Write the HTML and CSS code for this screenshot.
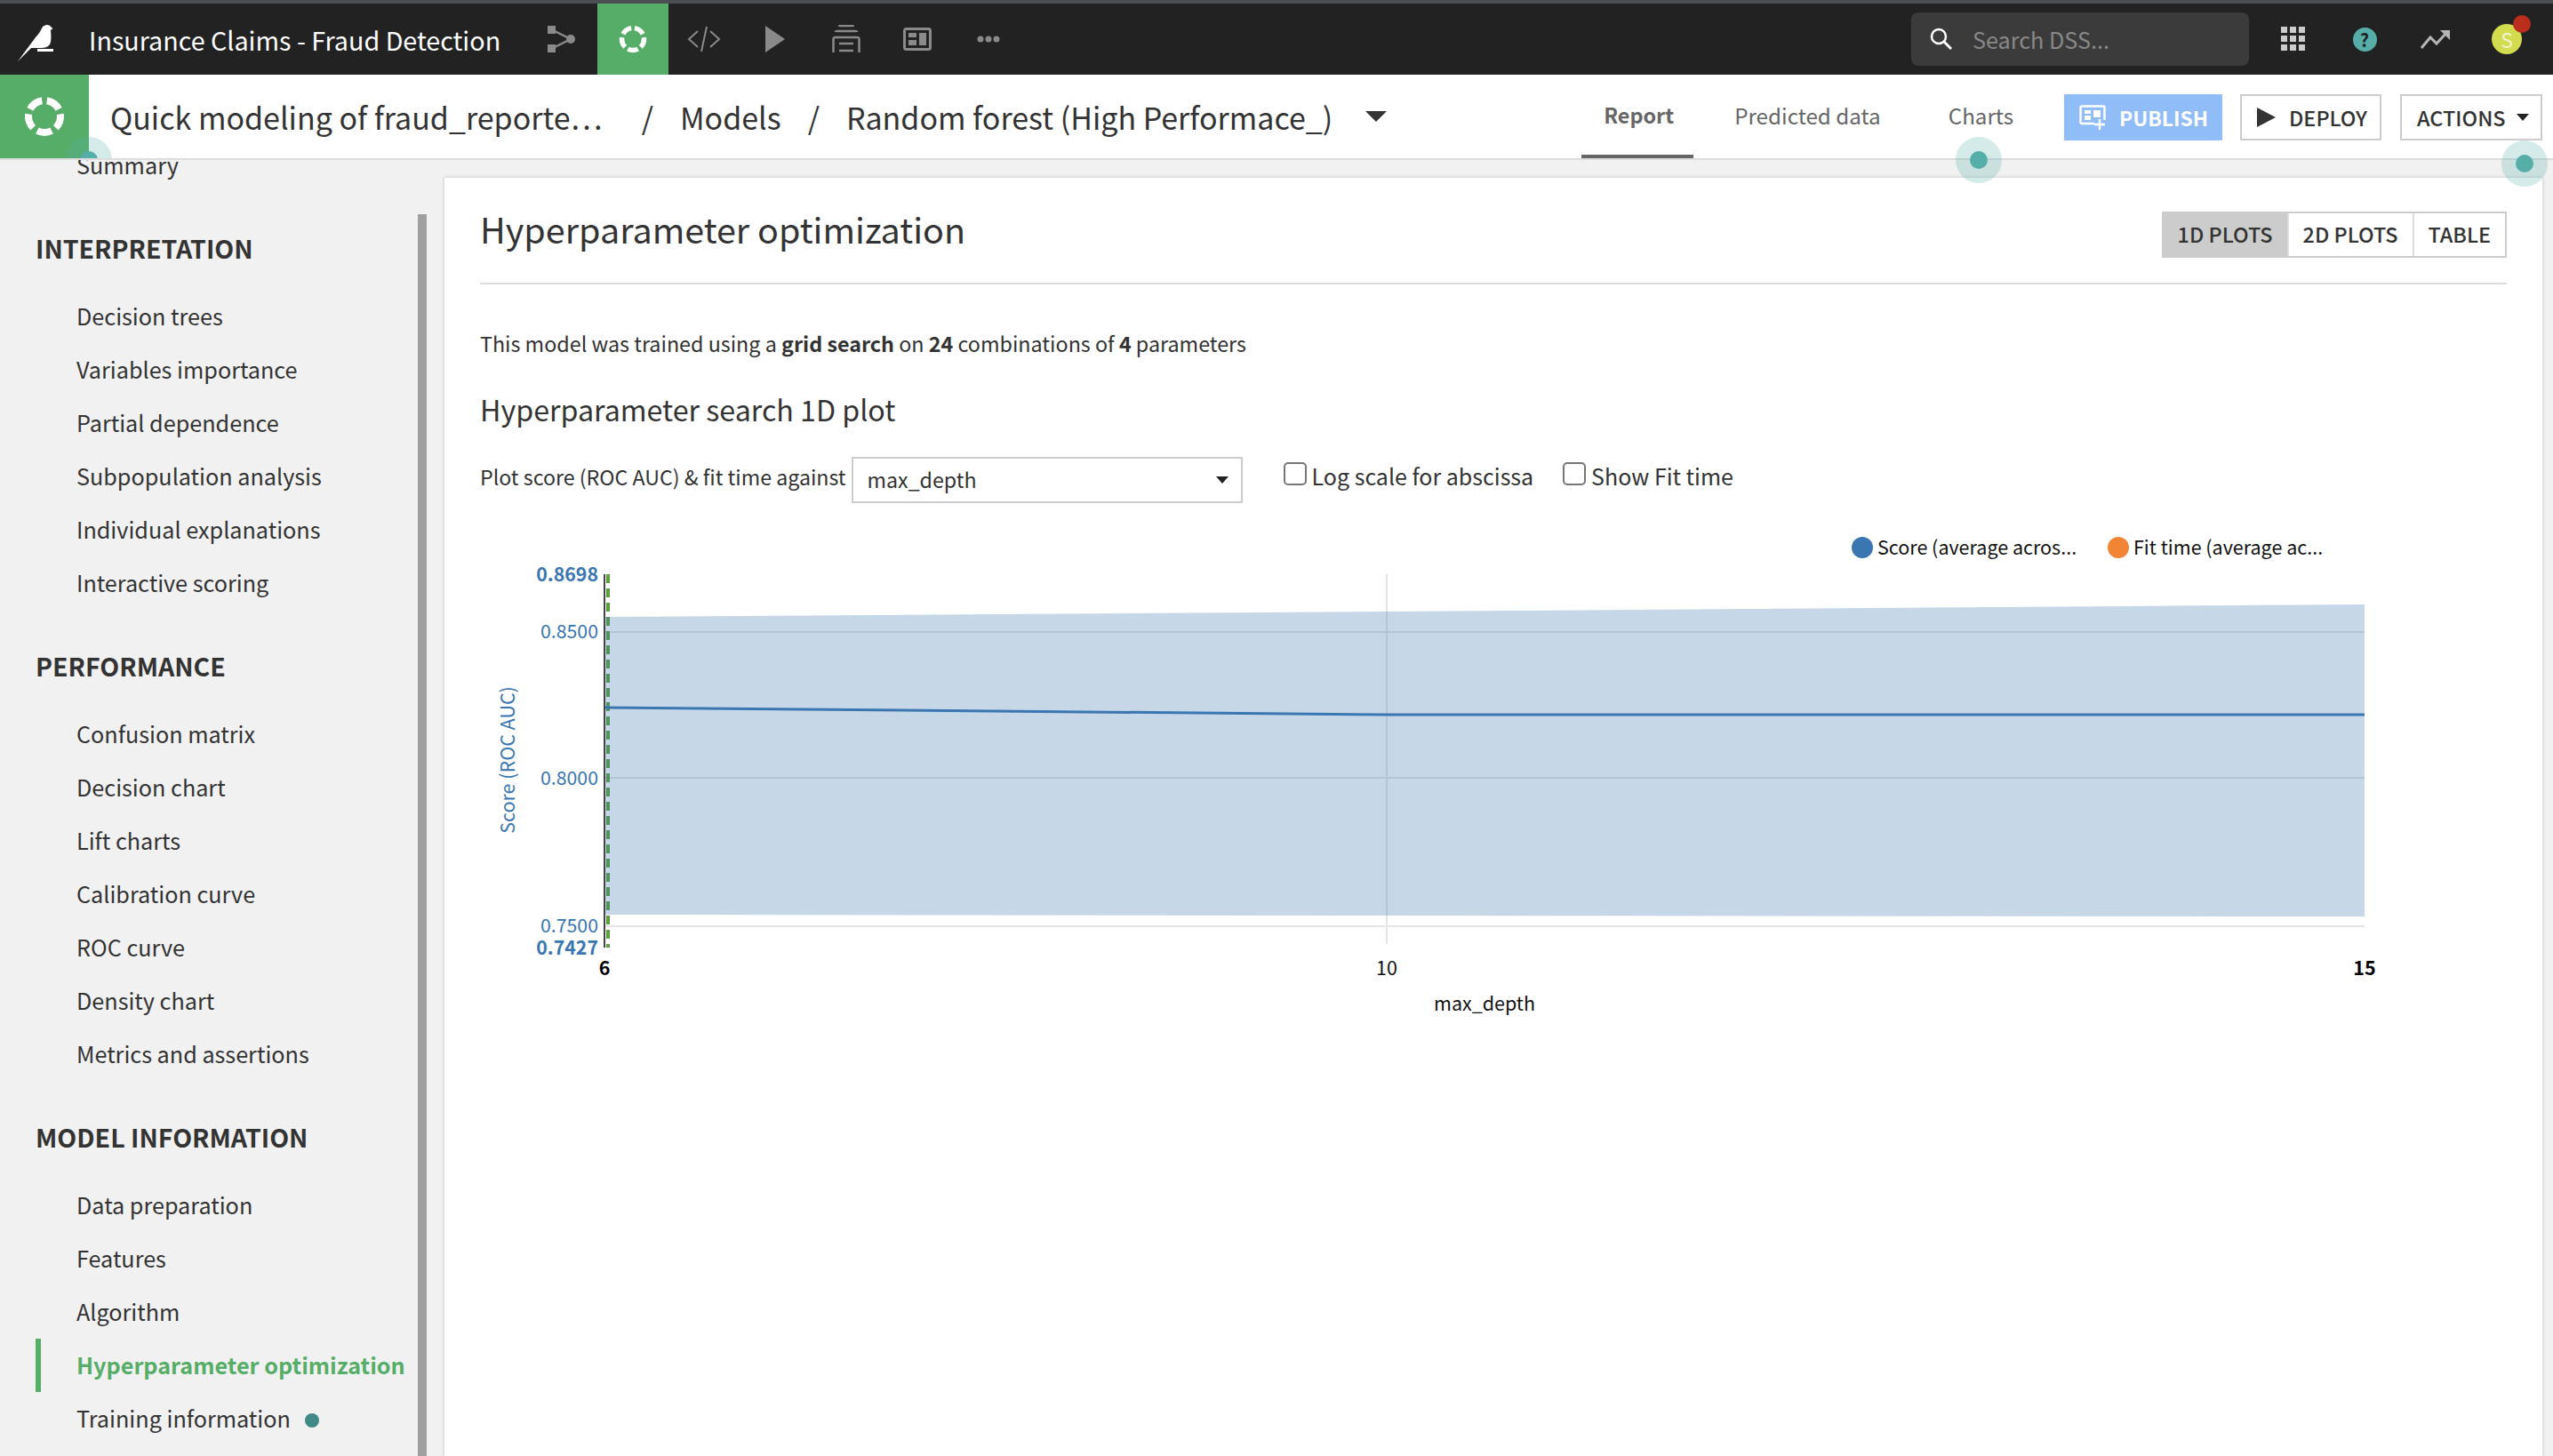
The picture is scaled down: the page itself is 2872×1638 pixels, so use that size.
FILE: index.html
```html
<!DOCTYPE html>
<html lang="en">
<head>
  <meta charset="UTF-8">
  <meta name="viewport" content="width=device-width, initial-scale=1.0">
  <title>Insurance Claims - Fraud Detection</title>
  <link rel="stylesheet" href="styles.css">
</head>
<body>
  <div id="page">
    <!-- top bar -->
    <div class="topbar">
      <div class="logo-cell">
        <svg width="44" height="44" viewBox="18 26 44 44"><path d="M20 69 L40 42 C44 38 46 34 47 32 C48 29 51 28 53 28 C55 28 57 29 58 31 L59.500 32 L57 34 C57.500 40 58 46 56 50 C54 53 50 54 46 54 H38 L35 54 Z" fill="#fff"/><rect x="42" y="55" width="18" height="3" fill="#fff"/></svg>
      </div>
      <div class="project-title">Insurance Claims - Fraud Detection</div>
      <div class="nav-cell">
        <svg width="32" height="32" viewBox="0 0 32 32"><g fill="#8a8a8a"><rect x="0" y="1" width="9" height="9"/><rect x="0" y="22" width="9" height="9"/><circle cx="26" cy="16" r="5"/></g><path d="M6 6 L26 16 L6 26" fill="none" stroke="#8a8a8a" stroke-width="2.5"/></svg>
      </div>
      <div class="nav-cell active">
        <svg width="32" height="32" viewBox="0 0 32 32"><circle cx="16" cy="16" r="12.500" fill="none" stroke="#fff" stroke-width="5.500" pathLength="100" stroke-dasharray="15 5" stroke-dashoffset="-17.500"/></svg>
      </div>
      <div class="nav-cell">
        <svg width="38" height="32" viewBox="0 0 38 32"><path d="M12 7 L2 16 L12 25 M26 7 L36 16 L26 25 M22 2 L16 30" fill="none" stroke="#8a8a8a" stroke-width="2"/></svg>
      </div>
      <div class="nav-cell">
        <svg width="22" height="30" viewBox="0 0 22 30"><path d="M0 0 L22 15 L0 30 Z" fill="#8a8a8a"/></svg>
      </div>
      <div class="nav-cell">
        <svg width="32" height="32" viewBox="0 0 32 32"><g fill="none" stroke="#8a8a8a" stroke-width="2.5"><path d="M8 2 Q8 1 10 1 H22 Q24 1 24 2"/><path d="M4 8 Q4 7 6 7 H26 Q28 7 28 8"/><path d="M1.500 31 V16 Q1.500 14 4 14 H28 Q30.500 14 30.500 16 V31"/><path d="M8 21 H24 M8 29 H24"/></g></svg>
      </div>
      <div class="nav-cell">
        <svg width="32" height="26" viewBox="0 0 32 26"><rect x="1.500" y="1.500" width="29" height="23" rx="2" fill="none" stroke="#8a8a8a" stroke-width="3"/><rect x="6" y="6" width="9" height="5" fill="#8a8a8a"/><rect x="6" y="14" width="9" height="6" fill="#8a8a8a"/><rect x="18" y="6" width="8" height="14" fill="#8a8a8a"/></svg>
      </div>
      <div class="nav-cell">
        <svg width="26" height="8" viewBox="0 0 26 8"><g fill="#8a8a8a"><circle cx="4" cy="4" r="3.500"/><circle cx="13" cy="4" r="3.500"/><circle cx="22" cy="4" r="3.500"/></g></svg>
      </div>
      <div class="search-box">
        <svg width="28" height="28" viewBox="0 0 28 28"><circle cx="11" cy="11" r="8" fill="none" stroke="#fff" stroke-width="2.500"/><path d="M17 17 L25 25" stroke="#fff" stroke-width="3"/></svg>
        <span>Search DSS...</span>
      </div>
      <div class="nav-cell">
        <svg width="28" height="28" viewBox="0 0 28 28"><g fill="#ccc"><rect x="0" y="0" width="7" height="7"/><rect x="10" y="0" width="7" height="7"/><rect x="20" y="0" width="7" height="7"/><rect x="0" y="10" width="7" height="7"/><rect x="10" y="10" width="7" height="7"/><rect x="20" y="10" width="7" height="7"/><rect x="0" y="20" width="7" height="7"/><rect x="10" y="20" width="7" height="7"/><rect x="20" y="20" width="7" height="7"/></g></svg>
      </div>
      <div class="nav-cell"><span class="help-badge">?</span></div>
      <div class="nav-cell">
        <svg width="34" height="22" viewBox="0 0 34 22"><path d="M1 21 L11 9 L18 16 L29 4" fill="none" stroke="#b5b5b5" stroke-width="3"/><path d="M22 1 H33 V12 Z" fill="#b5b5b5"/></svg>
      </div>
      <div class="nav-cell">
        <span class="avatar">S<span class="avatar-dot"></span></span>
      </div>
    </div>

    <!-- breadcrumb and tabs -->
    <div class="subnav">
      <div class="model-badge">
        <svg width="46" height="46" viewBox="0 0 46 46"><circle cx="23" cy="23" r="18" fill="none" stroke="#fff" stroke-width="8" pathLength="100" stroke-dasharray="15 5" stroke-dashoffset="-17.500"/></svg>
      </div>
      <span class="hotspot hotspot-left"></span>
      <div class="crumbs">
        <span class="crumb crumb-first">Quick modeling of fraud_reporte…</span>
        <span class="crumb-sep">/</span>
        <span class="crumb">Models</span>
        <span class="crumb-sep">/</span>
        <span class="crumb">Random forest (High Performace_)</span>
        <span class="crumb-caret"></span>
      </div>
      <div class="tabs">
        <div class="tab selected">Report</div>
        <div class="tab">Predicted data</div>
        <div class="tab">Charts</div>
      </div>
      <div class="btn btn-publish">
        <svg width="30" height="28" viewBox="0 0 30 28"><path d="M17 21 H3 Q1.500 21 1.500 19.500 V3 Q1.500 1.500 3 1.500 H27 Q28.500 1.500 28.500 3 V17" fill="none" stroke="#fff" stroke-width="2.500"/><rect x="6" y="6" width="7" height="4" fill="#fff"/><rect x="16" y="6" width="8" height="8" fill="#fff"/><rect x="6" y="12" width="7" height="5" fill="#fff"/><path d="M23 16 V28 M17 22 H29" stroke="#fff" stroke-width="2.500"/></svg>
        PUBLISH
      </div>
      <div class="btn btn-deploy">
        <svg width="21" height="22" viewBox="0 0 21 22"><path d="M0 0 L21 11 L0 22 Z" fill="#333"/></svg>
        DEPLOY
      </div>
      <div class="btn btn-actions">ACTIONS <span class="small-caret"></span></div>
    </div>

    <div class="workspace">
      <!-- left menu, scrolled a little -->
      <div class="sidebar">
        <div class="menu">
          <div class="menu-item">Summary</div>
          <div class="menu-title">INTERPRETATION</div>
          <div class="menu-item">Decision trees</div>
          <div class="menu-item">Variables importance</div>
          <div class="menu-item">Partial dependence</div>
          <div class="menu-item">Subpopulation analysis</div>
          <div class="menu-item">Individual explanations</div>
          <div class="menu-item">Interactive scoring</div>
          <div class="menu-title">PERFORMANCE</div>
          <div class="menu-item">Confusion matrix</div>
          <div class="menu-item">Decision chart</div>
          <div class="menu-item">Lift charts</div>
          <div class="menu-item">Calibration curve</div>
          <div class="menu-item">ROC curve</div>
          <div class="menu-item">Density chart</div>
          <div class="menu-item">Metrics and assertions</div>
          <div class="menu-title">MODEL INFORMATION</div>
          <div class="menu-item">Data preparation</div>
          <div class="menu-item">Features</div>
          <div class="menu-item">Algorithm</div>
          <div class="menu-item current">Hyperparameter optimization</div>
          <div class="menu-item">Training information <span class="menu-dot"></span></div>
        </div>
        <div class="scrollbar"></div>
      </div>

      <div class="card">
        <div class="card-head">
          <h2>Hyperparameter optimization</h2>
          <div class="btn-group">
            <div class="group-btn on">1D PLOTS</div>
            <div class="group-btn">2D PLOTS</div>
            <div class="group-btn">TABLE</div>
          </div>
        </div>
        <p class="summary">This model was trained using a <b>grid search</b> on <b>24</b> combinations of <b>4</b> parameters</p>
        <h3>Hyperparameter search 1D plot</h3>
        <div class="plot-controls">
          <label class="plot-label">Plot score (ROC AUC) &amp; fit time against</label>
          <div class="select-box"><span class="select-value">max_depth</span> <span class="small-caret"></span></div>
          <label class="check check-log"><input type="checkbox">Log scale for abscissa</label>
          <label class="check"><input type="checkbox">Show Fit time</label>
        </div>

        <svg class="chart" width="2280" height="570" viewBox="540 590 2280 570">
          <circle cx="2095" cy="616" r="12" fill="#3a76b0"/>
          <text class="legend" x="2112" y="624">Score (average acros...</text>
          <circle cx="2383" cy="616" r="12" fill="#f28535"/>
          <text class="legend" x="2400" y="624">Fit time (average ac...</text>

          <g stroke="#e5e5e5" stroke-width="2">
            <line x1="680" y1="711" x2="2660" y2="711"/>
            <line x1="680" y1="875" x2="2660" y2="875"/>
            <line x1="680" y1="1042" x2="2660" y2="1042"/>
            <line x1="1560" y1="646" x2="1560" y2="1062"/>
          </g>
          <line x1="684" y1="646" x2="684" y2="1066" stroke="#5aa03c" stroke-width="4" stroke-dasharray="10 6"/>
          <polygon points="680,694 1560,688 2660,680 2660,1031 1560,1030 680,1029" fill="#3a76b0" fill-opacity="0.29"/>
          <polyline points="680,796 1560,804 2660,804" fill="none" stroke="#3a76b0" stroke-width="3"/>
          <line x1="680" y1="646" x2="680" y2="1066" stroke="#444" stroke-width="2"/>

          <g class="tick-y">
            <text class="strong" x="673" y="654">0.8698</text>
            <text x="673" y="718">0.8500</text>
            <text x="673" y="883">0.8000</text>
            <text x="673" y="1049">0.7500</text>
            <text class="strong" x="673" y="1074">0.7427</text>
          </g>
          <text class="axis-name-y" transform="translate(579 855) rotate(-90)">Score (ROC AUC)</text>
          <g class="tick-x">
            <text class="strong" x="680" y="1097">6</text>
            <text x="1560" y="1097">10</text>
            <text class="strong" x="2660" y="1097">15</text>
          </g>
          <text class="axis-name-x" x="1670" y="1137">max_depth</text>
        </svg>
      </div>
    </div>

    <span class="hotspot hotspot-charts"></span>
    <span class="hotspot hotspot-actions"></span>
  </div>
</body>
</html>
```

FILE: styles.css
```css
* {
  box-sizing: border-box;
}

html, body {
  margin: 0;
  padding: 0;
}

body {
  font-family: "Noto Sans CJK SC", "Noto Sans", sans-serif;
  color: #333;
  background-color: #fff;
}

#page {
  position: relative;
  width: 2872px;
  height: 1638px;
  overflow: hidden;
}

/* top bar */
.topbar {
  display: flex;
  align-items: stretch;
  height: 84px;
  background-color: #222;
  border-top: 4px solid #4b4e53;
}

.logo-cell {
  width: 100px;
  padding: 8px 0 0 18px;
  display: flex;
  align-items: center;
}

.project-title {
  width: 492px;
  display: flex;
  align-items: center;
  color: #fff;
  font-size: 28.700px;
  white-space: nowrap;
}

.nav-cell {
  width: 80px;
  display: flex;
  align-items: center;
  justify-content: center;
}

.nav-cell.active {
  background-color: #56ad68;
}

.search-box {
  width: 380px;
  height: 60px;
  margin: 10px 10px 0 998px;
  padding-left: 20px;
  display: flex;
  align-items: center;
  gap: 21px;
  background-color: #3b3b3b;
  border-radius: 8px;
  color: #888;
  font-size: 25.200px;
}

.help-badge {
  width: 27px;
  height: 27px;
  border-radius: 50%;
  background-color: #55aea8;
  color: #222;
  font-size: 20px;
  font-weight: 700;
  line-height: 27px;
  text-align: center;
}

.avatar {
  position: relative;
  width: 34px;
  height: 34px;
  border-radius: 50%;
  background-color: #d3db4f;
  color: #f3f3d0;
  font-size: 23px;
  line-height: 34px;
  text-align: center;
}

.avatar-dot {
  position: absolute;
  top: -10px;
  left: 24px;
  width: 20px;
  height: 20px;
  border-radius: 50%;
  background-color: #bb2d1c;
}

/* breadcrumb row */
.subnav {
  position: relative;
  height: 96px;
  padding-right: 12px;
  display: flex;
  background-color: #fff;
  border-bottom: 2px solid #ddd;
  overflow: hidden;
}

.model-badge {
  width: 100px;
  height: 94px;
  display: flex;
  align-items: center;
  justify-content: center;
  background-color: #56ad68;
}

.crumbs {
  flex: 1;
  padding-left: 24px;
  display: flex;
  align-items: center;
  font-size: 34px;
  white-space: nowrap;
}

.crumb-first {
  margin-right: 14px;
}

.crumb-sep {
  margin: 0 30px;
}

.crumb-caret {
  margin-left: 37px;
  border-top: 12px solid #333;
  border-left: 12px solid transparent;
  border-right: 12px solid transparent;
}

.tabs {
  display: flex;
  gap: 24px;
}

.tab {
  height: 94px;
  padding: 0 26px 3px;
  display: flex;
  align-items: center;
  color: #666;
  font-size: 24.200px;
}

.tab.selected {
  margin-right: -4px;
  padding: 0 22px 0 25px;
  font-size: 23.400px;
  font-weight: 700;
  border-bottom: 4px solid #666;
}

.btn {
  height: 52px;
  margin-top: 22px;
  display: flex;
  align-items: center;
  font-size: 23.400px;
  font-weight: 500;
}

.btn-publish {
  width: 178px;
  gap: 15px;
  padding-left: 17px;
  margin-left: 31px;
  background-color: #90bcf8;
  color: #fff;
  font-size: 22.800px;
  font-weight: 700;
}

.btn-deploy {
  width: 159px;
  margin-left: 20px;
  padding-left: 17px;
  gap: 15px;
  border: 2px solid #ccc;
}

.btn-actions {
  width: 160px;
  margin-left: 21px;
  padding-left: 17px;
  gap: 12px;
  border: 2px solid #ccc;
}

.small-caret {
  display: inline-block;
  border-top: 8px solid #222;
  border-left: 7px solid transparent;
  border-right: 7px solid transparent;
}

/* teal tutorial dots */
.hotspot {
  position: absolute;
  width: 52px;
  height: 52px;
  border-radius: 50%;
  background-color: rgba(85, 174, 168, 0.25);
}

.hotspot::after {
  content: "";
  position: absolute;
  top: 16px;
  left: 16px;
  width: 20px;
  height: 20px;
  border-radius: 50%;
  background-color: #55aea8;
}

.hotspot-left {
  left: 74px;
  top: 70px;
}

.hotspot-charts {
  left: 2200px;
  top: 154px;
}

.hotspot-actions {
  left: 2814px;
  top: 158px;
}

/* body */
.workspace {
  display: flex;
  height: 1458px;
  background-color: #f1f1f1;
}

.sidebar {
  position: relative;
  width: 500px;
  overflow: hidden;
}

.menu {
  margin-top: -24px;
}

.menu-title {
  height: 50px;
  margin: 39px 0 21px 40px;
  font-size: 28.500px;
  font-weight: 700;
  line-height: 48px;
}

.menu-item {
  height: 60px;
  padding-left: 86px;
  font-size: 25.200px;
  line-height: 58px;
  white-space: nowrap;
}

.menu-item.current {
  margin-left: 40px;
  padding-left: 40px;
  border-left: 6px solid #56ad68;
  color: #56ad68;
  font-weight: 700;
}

.menu-dot {
  display: inline-block;
  width: 16px;
  height: 16px;
  margin-left: 10px;
  border-radius: 50%;
  background-color: #3f8a86;
}

.scrollbar {
  position: absolute;
  top: 61px;
  bottom: 0;
  left: 470px;
  width: 10px;
  background-color: #a0a0a0;
}

.card {
  width: 2360px;
  margin-top: 20px;
  padding: 0 40px;
  background-color: #fff;
  box-shadow: 0 0 4px rgba(0, 0, 0, 0.2);
}

.card-head {
  height: 120px;
  padding-top: 38px;
  display: flex;
  justify-content: space-between;
  align-items: flex-start;
  border-bottom: 2px solid #ddd;
}

h2 {
  margin: -6px 0 0;
  font-size: 39.500px;
  font-weight: 400;
  line-height: 50px;
}

.btn-group {
  display: flex;
  height: 52px;
  border: 2px solid #ccc;
}

.group-btn {
  padding: 0 16px;
  font-size: 23.400px;
  font-weight: 500;
  line-height: 46px;
  border-left: 2px solid #ddd;
}

.group-btn:first-child {
  border-left: none;
}

.group-btn.on {
  background-color: #ccc;
}

.summary {
  margin: 46px 0 0;
  font-size: 23.300px;
  line-height: 40px;
}

h3 {
  margin: 32px 0 0;
  font-size: 32.200px;
  font-weight: 400;
  line-height: 44px;
}

.plot-controls {
  height: 52px;
  margin-top: 32px;
  display: flex;
  align-items: center;
  font-size: 23.200px;
}

.plot-label {
  margin-bottom: 8px;
}

.select-box {
  width: 440px;
  height: 52px;
  margin-left: 6px;
  padding: 0 14px 0 16px;
  display: flex;
  align-items: center;
  justify-content: space-between;
  border: 2px solid #ccc;
}

.select-value {
  margin-bottom: 3px;
}

.check {
  display: flex;
  align-items: center;
  margin-left: 33px;
  margin-bottom: 10px;
  font-size: 25px;
}

.check-log {
  margin-left: 46px;
}

.check input {
  appearance: none;
  width: 26px;
  height: 26px;
  margin: 0 6px 4px 0;
  background-color: #fff;
  border: 2px solid #767676;
  border-radius: 5px;
}

.chart {
  display: block;
  margin-top: 24px;
}

.chart text {
  font-family: "Noto Sans CJK SC", "Noto Sans", sans-serif;
}

.legend {
  font-size: 21.500px;
  fill: #111;
}

.tick-y text {
  font-size: 21.300px;
  fill: #3a76b0;
  text-anchor: end;
}

.tick-y .strong {
  font-weight: 700;
}

.axis-name-y {
  font-size: 21.500px;
  fill: #3a76b0;
  text-anchor: middle;
}

.tick-x text {
  font-size: 21.500px;
  fill: #111;
  text-anchor: middle;
}

.tick-x .strong {
  font-weight: 700;
  fill: #000;
}

.axis-name-x {
  font-size: 21.500px;
  fill: #111;
  text-anchor: middle;
}
```
